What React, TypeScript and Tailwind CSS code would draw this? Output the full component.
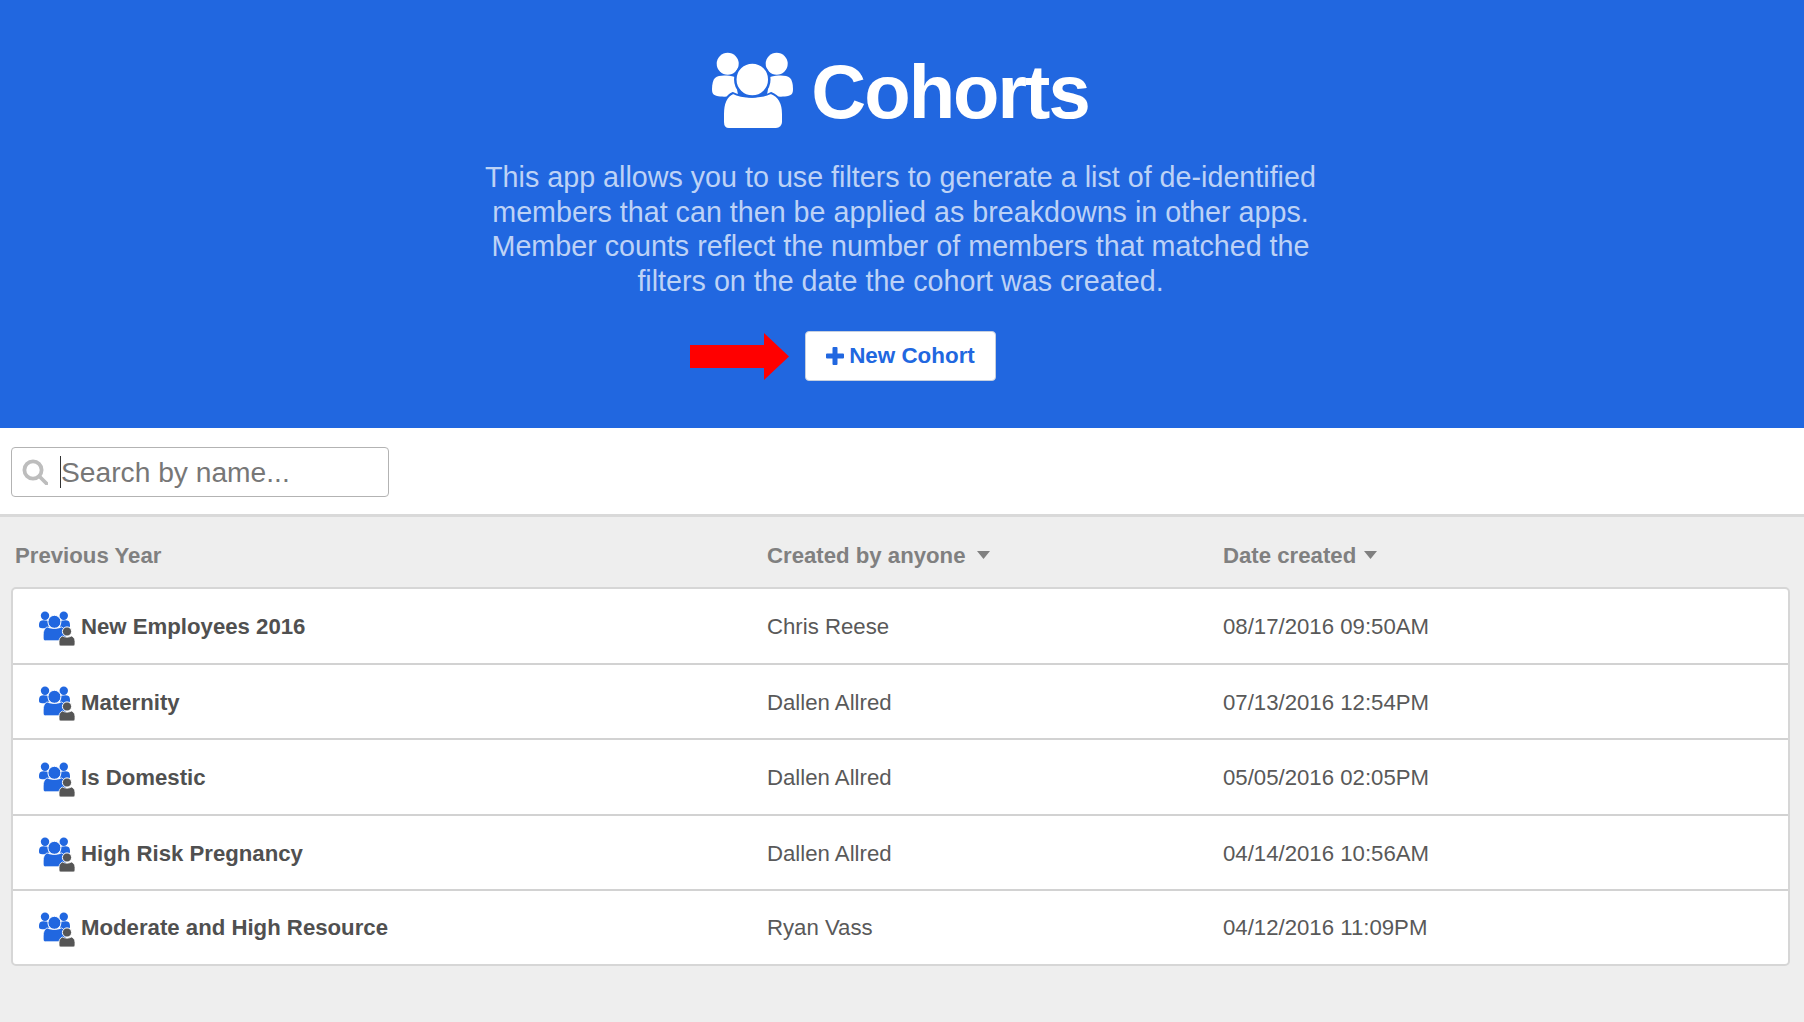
const rows = [
  ["New Employees 2016", "Chris Reese", "08/17/2016 09:50AM"],
  ["Maternity", "Dallen Allred", "07/13/2016 12:54PM"],
  ["Is Domestic", "Dallen Allred", "05/05/2016 02:05PM"],
  ["High Risk Pregnancy", "Dallen Allred", "04/14/2016 10:56AM"],
  ["Moderate and High Resource", "Ryan Vass", "04/12/2016 11:09PM"],
];

function People({ fill, ring, className }: { fill: string; ring: string; className: string }) {
  const side = "M3 26 C7 23 14 23 23 25 L26 43 C18 45 9 45 5 44 C1 43 0 41 0 37 C0 32 1 28 3 26Z";
  return (
    <svg viewBox="0 0 81 77" className={className} fill={fill}>
      <path d={side} />
      <path d={side} transform="matrix(-1 0 0 1 81 0)" />
      <circle cx="15.7" cy="11.7" r="11" />
      <circle cx="64.7" cy="11.7" r="11" />
      <path
        d="M21 41 C30 46 50 46 59 41 C67 44 71 52 71 62 L71 70 C71 74 68 77 64 77 L17 77 C13 77 11 74 11 70 L11 62 C11 52 14 44 21 41Z"
        stroke={ring}
        strokeWidth="2"
      />
      <circle cx="40.3" cy="27.5" r="17" stroke={ring} strokeWidth="2.5" />
    </svg>
  );
}

function RowIcon() {
  return (
    <div className="relative w-[36px] h-[35px] shrink-0 mt-[3px]">
      <People fill="#2167e0" ring="#ffffff" className="w-[31px] h-[30px]" />
      <svg viewBox="-1 -1 18 21" className="absolute right-[-1px] bottom-[-1px] w-[18px] h-[21px]" fill="#555555">
        <circle cx="8" cy="4.5" r="4.6" stroke="#ffffff" strokeWidth="1" />
        <path
          d="M3.5 9 C6 10.5 10 10.5 12.5 9 C15 10 16 12 16 14.5 L16 17 C16 18.4 15 19 14 19 L2 19 C1 19 0 18.4 0 17 L0 14.5 C0 12 1 10 3.5 9Z"
          stroke="#ffffff"
          strokeWidth="0.8"
        />
      </svg>
    </div>
  );
}

function Caret() {
  return (
    <svg viewBox="0 0 13 8" className="w-[13px] h-[8px]" fill="#808080">
      <path d="M0 0 H13 L6.5 8Z" />
    </svg>
  );
}

export default function App() {
  return (
    <div className="w-[1804px] h-[1022px] overflow-hidden bg-[#eeeeee] font-['Liberation_Sans',Arial,sans-serif]">
      <header className="h-[428px] bg-[#2167e0] flex flex-col items-center pt-[52px]">
        <div className="flex items-center gap-[18px] h-[77px] ml-[-3px]">
          <People fill="#ffffff" ring="#2167e0" className="w-[81px] h-[77px]" />
          <h1 className="mt-[2px] text-[76px] leading-[77px] font-bold tracking-[-2px] text-white">Cohorts</h1>
        </div>
        <p className="mt-[31px] ml-[-3px] w-[900px] text-center text-[28.7px] leading-[34.5px] text-[#bdd2f6]">
          This app allows you to use filters to generate a list of de-identified
          <br />
          members that can then be applied as breakdowns in other apps.
          <br />
          Member counts reflect the number of members that matched the
          <br />
          filters on the date the cohort was created.
        </p>
        <div className="relative mt-[33px] ml-[-3px]">
          <svg viewBox="0 0 99 47" className="absolute left-[-115px] top-[2px] w-[99px] h-[47px]" fill="#ff0000">
            <path d="M0 12 H74 V0 L99 23.5 L74 47 V35 H0Z" />
          </svg>
          <button className="w-[191px] h-[50px] flex items-center justify-center gap-[5px] bg-white rounded-[4px] border border-[#c5cfdf] text-[#2167e0] text-[22.4px] font-bold">
            <svg viewBox="0 0 18 18" className="w-[18px] h-[18px]" fill="#2167e0">
              <path d="M6.5 1 Q6.5 0 7.5 0 H10.5 Q11.5 0 11.5 1 V6.5 H17 Q18 6.5 18 7.5 V10.5 Q18 11.5 17 11.5 H11.5 V17 Q11.5 18 10.5 18 H7.5 Q6.5 18 6.5 17 V11.5 H1 Q0 11.5 0 10.5 V7.5 Q0 6.5 1 6.5 H6.5Z" />
            </svg>
            New Cohort
          </button>
        </div>
      </header>

      <div className="h-[89px] bg-white border-b-[3px] border-[#d9d9d9] pt-[19px] pl-[11px]">
        <div className="w-[378px] h-[50px] flex items-center bg-white border border-[#b3b3b3] rounded-[4px]">
          <svg viewBox="0 0 26 26" className="ml-[10px] w-[26px] h-[26px] shrink-0" fill="none" stroke="#bdbdbd" strokeWidth="3.8">
            <circle cx="11" cy="11" r="8.6" />
            <path d="M17.5 17.5 L24.5 24.5" strokeLinecap="round" />
          </svg>
          <div className="ml-[12px] w-[1px] h-[32px] bg-[#333333] shrink-0" />
          <span className="text-[28.2px] text-[#777777] leading-none">Search by name...</span>
        </div>
      </div>

      <div className="flex items-center h-[70px] pt-[7px] text-[22.2px] font-bold text-[#808080] pl-[15px]">
        <span className="w-[752px]">Previous Year</span>
        <span className="w-[456px] flex items-center gap-[11px]">
          Created by anyone
          <Caret />
        </span>
        <span className="flex items-center gap-[8px]">
          Date created
          <Caret />
        </span>
      </div>

      <div className="ml-[11px] w-[1779px] bg-white border-2 border-[#d6d6d6] rounded-[5px] text-[22.2px] text-[#595959]">
        {rows.map((r, i) => (
          <div
            key={r[0]}
            className={
              i < 4
                ? "flex items-center h-[75.5px] pt-[2px] border-b-2 border-[#d2d2d2]"
                : "flex items-center h-[73px] pt-[1px]"
            }
          >
            <div className="w-[754px] flex items-center pl-[26px] gap-[6px] font-bold text-[#505050]">
              <RowIcon />
              <span>{r[0]}</span>
            </div>
            <span className="w-[456px]">{r[1]}</span>
            <span>{r[2]}</span>
          </div>
        ))}
      </div>
    </div>
  );
}
